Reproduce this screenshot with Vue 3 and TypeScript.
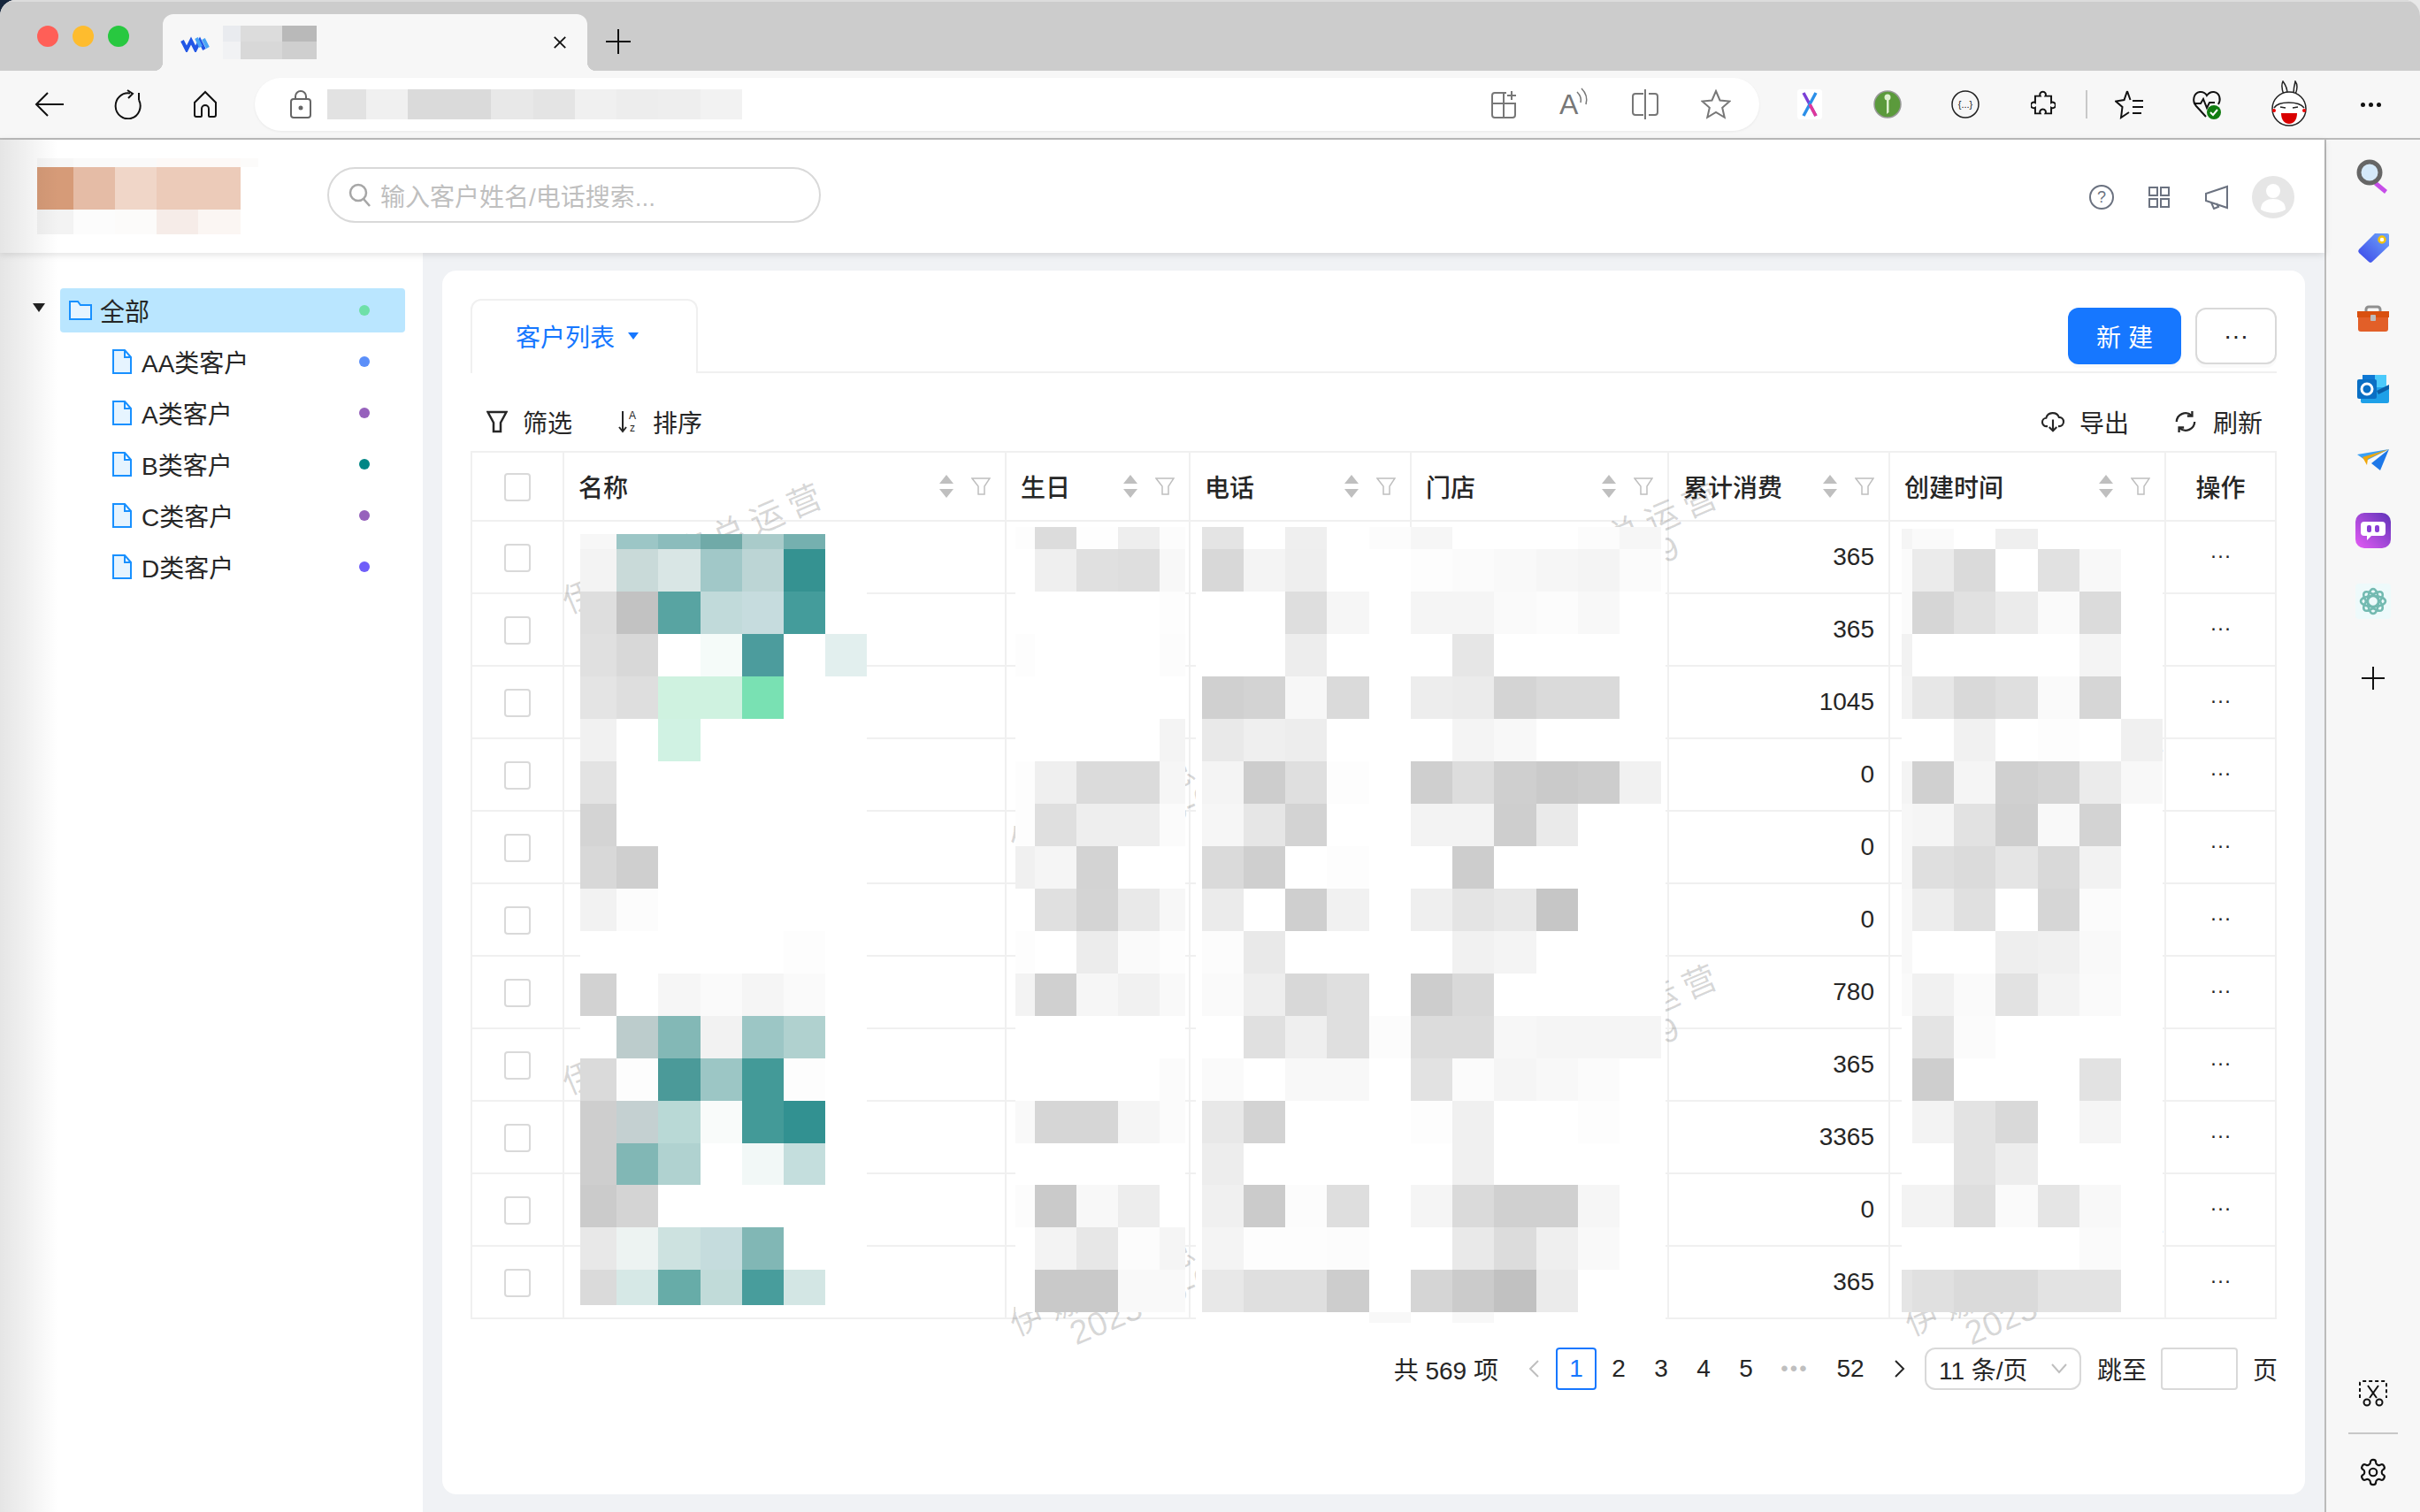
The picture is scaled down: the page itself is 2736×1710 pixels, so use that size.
<script setup lang="ts">
interface Mosaic {
  xs: number[]
  ys: number[]
  rows: string[]
}

const CARD_X = 500
const CARD_Y = 306

const treeChildren = [
  { label: 'AA类客户', dot: '#5b8ff9' },
  { label: 'A类客户', dot: '#9661bc' },
  { label: 'B类客户', dot: '#008685' },
  { label: 'C类客户', dot: '#9661bc' },
  { label: 'D类客户', dot: '#6f5ef9' }
]

const columns = ['名称', '生日', '电话', '门店', '累计消费', '创建时间']
const spend = ['365', '365', '1045', '0', '0', '0', '780', '365', '3365', '0', '365']
const pages = ['2', '3', '4', '5']

const rowEdges = [621, 669, 717, 765, 813, 861, 909, 957, 1005, 1053, 1101, 1149, 1197, 1245, 1293, 1340, 1388, 1436]

// pixelated cover blocks, colours per row (two digits = grey)
const mosaics: Mosaic[] = [
  {
    xs: [656, 697, 744, 792, 839, 886, 933, 980],
    ys: [604, ...rowEdges, 1476],
    rows: [
      'f7 9cc6c6 8bbcbc 70aaa8 a9cbca 75b0af',
      'f3 c9dad9 d9e6e5 a1c8c8 bcd5d5 359291',
      'de c2 58a4a2 c1dada c6dcde 449c9b',
      'e0 d8 ff f5fbf9 4c9c9d ff e2efee',
      'e4 de cff2e0 cff2e0 79e1b3',
      'f1 ff d0f2e3',
      'e3',
      'd4',
      'd8 cf',
      'f2 fc',
      'ff ff ff ff ff fd',
      'd2 ff f6 fa f5 fa',
      'ff bccccc 83b8b6 f2 9cc6c5 b0d1cf',
      'da fd 4b9a99 9cc6c5 439a98 fd',
      'ce c4d0d1 b9d9d6 f9fbfa 439a98 329191',
      'ce 81b7b5 b0d2d0 ff f2f8f7 c4dedd',
      'cb d4',
      'e8 edf3f2 cde2e0 c5dcdd 81b7b5',
      'da d6e8e6 67aca8 c1dbd9 489d9c d3e6e4'
    ]
  },
  {
    xs: [1148, 1170, 1217, 1264, 1311, 1340],
    ys: [596, ...rowEdges, 1484],
    rows: [
      'fd dc fe ee fc',
      'ff ef e0 de f8',
      'ff ff ff ff fd',
      'fd ff ff ff fc',
      'ff',
      'ff ff ff ff f4',
      'fd ef db db f6',
      'fd df ee ee fb',
      'f0 f5 d3 ff ff',
      'ff e0 d4 e9 f7',
      'fd ff ec fa fd',
      'f3 d0 f6 f1 f9',
      'ff',
      'ff ff ff ff fb',
      'f9 d6 d6 f5 fb',
      'ff',
      'fc ca f8 ed ff',
      'ff f3 e7 fc f5',
      'ff c9 c9 f9 f9'
    ]
  },
  { xs: [1352, 1359], ys: [596, 1496], rows: ['ff'] },
  {
    xs: [1359, 1406, 1453, 1500, 1548, 1595, 1642, 1689, 1737, 1784, 1831, 1878, 1883],
    ys: [596, ...rowEdges, 1484, 1496],
    rows: [
      'e4 ff ef ff fc f6 ff ff ff fc f6',
      'd8 f4 ee ff ff fd fb f9 f6 f4 fb',
      'ff ff de f6 ff f5 f5 fa fc f8',
      'ff ff ed ff ff ff e6',
      'd0 d3 f7 da ff ed eb d4 da da',
      'e9 ef ed ff ff ff f4 f8',
      'f4 cd df fd ff cf dd cf ca cd f1',
      'f6 e6 d3 ff ff f3 f3 ce ea',
      'da cf ff fd ff ff cd',
      'eb ff cf f1 ff ef e4 e8 c6',
      'fc e9 ff ff ff ff f1 f4',
      'fa ee d8 df ff cd d9',
      'ff e0 ef df fc dc dc f7 f5 f5 f5',
      'fa ff f8 f8 ff e2 fb f5 f8 fb',
      'e8 d3 ff ff ff fd f0 ff ff fd',
      'ed ff ff ff ff ff f0',
      'f0 cb fc de ff f5 da d0 d0 f6',
      'f4 fd fd fc ff ff e9 dc ef f9',
      'e8 df df cd ff d5 cb c1 eb',
      'ff ff ff ff f8 ff f8'
    ]
  },
  {
    xs: [2150, 2162, 2209, 2256, 2304, 2351, 2398, 2445],
    ys: [598, ...rowEdges, 1484],
    rows: [
      'f5 fa ff ef',
      'fb eb da ff e1 f8',
      'fb d6 e1 eb fa db',
      'f2 ff ff ff ff f4',
      'f3 e7 d9 df fa d6',
      'ff ff f1 ff fd ff f0',
      'f4 d0 f5 d0 d4 eb f8',
      'f7 f5 e2 ce f9 d3',
      'f7 df db e5 d9 f2',
      'f8 ed e0 ff d6 fb',
      'f8 ff ff ee f0 f9',
      'fa f1 fa e2 f3 fa',
      'ff e4 fb ff ff ff',
      'ff ce ff ff ff e2',
      'ff f3 e3 d9 ff f5',
      'ff ff e3 ed',
      'f3 f3 de fa e5 f8',
      'ff ff ff ff ff fa',
      'e5 e0 da da e3 e3'
    ]
  }
]

const watermarks = [
  [645, 699], [1151, 972], [1657, 699], [2163, 972],
  [645, 1243], [1151, 1516], [1657, 1243], [2163, 1516]
]

const colour = (c?: string) => {
  if (!c) return '#fff'
  return c.length === 2 ? `#${c}${c}${c}` : `#${c}`
}

const sizes = (edges: number[]) =>
  edges.slice(1).map((v, i) => `${v - edges[i]}px`).join(' ')

const mosaicStyle = (m: Mosaic) => ({
  left: `${m.xs[0] - CARD_X}px`,
  top: `${m.ys[0] - CARD_Y}px`,
  gridTemplateColumns: sizes(m.xs),
  gridTemplateRows: sizes(m.ys)
})

const mosaicCells = (m: Mosaic) =>
  m.rows.flatMap((row) => {
    const parts = row.split(' ')
    return m.xs.slice(1).map((_, i) => colour(parts[i]))
  })

const markStyle = (p: number[]) => ({
  left: `${p[0] - CARD_X}px`,
  top: `${p[1] - CARD_Y - 36}px`
})

const logoCells = [
  'f7', 'fa', 'fa', 'fdf9f7', 'fdf9f7', 'fcfbfa',
  'd69b78', 'e5bca6', 'f0d6c8', 'eccbb9', 'eccbb9', 'ff',
  'f3', 'fc', 'fcfbfa', 'f6ece8', 'fbf6f3', 'ff'
].map(colour)
const titleCells = ['e9ebef', 'dc', 'b9', 'f1f2f4', 'd8', 'cf'].map(colour)
const urlCells = ['e2', 'f0', 'da', 'da', 'e8', 'e4', 'f0', 'ed', 'ee', 'f2'].map(colour)
</script>

<template>
  <div class="browser">
    <div class="tab-strip">
      <div class="lights">
        <span class="light red"></span>
        <span class="light yellow"></span>
        <span class="light green"></span>
      </div>
      <div class="tab">
        <svg class="favicon" viewBox="0 0 34 18">
          <path d="M2 5l5 10L12 5l5 10L22 5l5 10" fill="none" stroke="#2257e6" stroke-width="4" />
          <path d="M18 2l5 10M26 3l5 10" fill="none" stroke="#4aa5f5" stroke-width="4" />
        </svg>
        <div class="title-mosaic">
          <i v-for="(c, i) in titleCells" :key="i" :style="{ background: c }"></i>
        </div>
        <svg class="tab-close" viewBox="0 0 18 18">
          <path d="M2 2l14 14M16 2L2 16" stroke="#111" stroke-width="2" />
        </svg>
      </div>
      <svg class="tab-plus" viewBox="0 0 28 28">
        <path d="M14 0v28M0 14h28" stroke="#111" stroke-width="2" />
      </svg>
    </div>

    <div class="toolbar">
      <div class="slot">
        <svg width="34" height="30" viewBox="0 0 34 30" fill="none" stroke="#111" stroke-width="2">
          <path d="M33 15H2M15 2L2 15l13 13" />
        </svg>
      </div>
      <div class="slot">
        <svg width="34" height="34" viewBox="0 0 34 34" fill="none" stroke="#111" stroke-width="2">
          <path d="M20 4.500A14 14.500 0 1 0 30 12" />
          <path d="M17 1l6 4-5 5M30 4v8" />
        </svg>
      </div>
      <div class="slot">
        <svg width="30" height="32" viewBox="0 0 30 32" fill="none" stroke="#111" stroke-width="2">
          <path d="M15 2L3 14v14a2 2 0 0 0 2 2h5a1 1 0 0 0 1-1v-8a4 4 0 0 1 8 0v8a1 1 0 0 0 1 1h5a2 2 0 0 0 2-2V14z" />
        </svg>
      </div>

      <div class="address">
        <svg class="lock" width="24" height="32" viewBox="0 0 24 32" fill="none" stroke="#666" stroke-width="2">
          <rect x="1" y="10" width="22" height="21" rx="3" />
          <path d="M6 10V7a6 6 0 0 1 12 0v3" />
          <circle cx="12" cy="20" r="1.500" fill="#666" />
        </svg>
        <div class="url-mosaic">
          <i v-for="(c, i) in urlCells" :key="i" :style="{ background: c }"></i>
        </div>
        <div class="address-icons">
          <div class="slot narrow">
            <svg width="30" height="32" viewBox="0 0 30 32" fill="none" stroke="#777" stroke-width="2">
              <path d="M18 3H5a3 3 0 0 0-3 3v22a3 3 0 0 0 3 3h20a3 3 0 0 0 3-3V15H2M15 3v28" />
              <path d="M24 1v10M19 6h10" />
            </svg>
          </div>
          <div class="slot narrow">
            <svg width="34" height="40" viewBox="0 0 34 40" fill="none" stroke="#777" stroke-width="1.500">
              <text x="0" y="31" font-size="32" font-family="Liberation Sans" fill="#777" stroke="none">A</text>
              <path d="M20 6c4 4 5 8 4 12M25 2c5 5 7 11 5 18" />
            </svg>
          </div>
          <div class="slot narrow">
            <svg width="32" height="34" viewBox="0 0 32 34" fill="none" stroke="#777" stroke-width="2">
              <path d="M14 5H5a3 3 0 0 0-3 3v18a3 3 0 0 0 3 3h9M20 5h7a3 3 0 0 1 3 3v18a3 3 0 0 1-3 3h-7M16 0v34" />
            </svg>
          </div>
          <div class="slot narrow">
            <svg width="34" height="34" viewBox="0 0 34 34" fill="none" stroke="#777" stroke-width="2">
              <path d="M17 2l4.500 10.500 11 1-8.300 7.300 2.500 11L17 26l-9.700 5.800 2.500-11L1.500 13.500l11-1z" />
            </svg>
          </div>
        </div>
      </div>

      <div class="extensions">
        <div class="slot">
          <svg width="28" height="34" viewBox="0 0 28 34" fill="none" stroke-width="3.500">
            <rect width="28" height="34" rx="3" fill="#fff" />
            <path d="M7 4l14 26" stroke="#7b3fd6" />
            <path d="M21 4L7 30" stroke="#2b8fe8" />
            <path d="M14 17l7 13" stroke="#e0389a" />
          </svg>
        </div>
        <div class="slot">
          <svg width="32" height="32" viewBox="0 0 32 32">
            <circle cx="16" cy="16" r="15" fill="#5b9a3c" stroke="#999" stroke-width="1.500" />
            <circle cx="16" cy="8" r="3.500" fill="#dff0d2" />
            <path d="M15 10h2.500v15L15 27z" fill="#dff0d2" />
          </svg>
        </div>
        <div class="slot">
          <svg width="32" height="32" viewBox="0 0 32 32" fill="none" stroke="#222" stroke-width="1.500">
            <circle cx="16" cy="16" r="15" />
            <text x="16" y="20" text-anchor="middle" font-size="11" font-family="Liberation Sans" fill="#222" stroke="none">{...}</text>
          </svg>
        </div>
        <div class="slot">
          <svg width="28" height="33" viewBox="4 2 17 20" fill="none" stroke="#111" stroke-width="1.200">
            <path d="M7 6h3.500a2 2 0 1 1 3.500 0H18v4.500a2 2 0 1 1 0 3.500V18h-4a2 2 0 1 0-3.500 0H7v-4a2 2 0 1 1 0-3.500z" />
          </svg>
        </div>
        <span class="ext-sep"></span>
        <div class="slot">
          <svg width="34" height="34" viewBox="0 0 34 34" fill="none" stroke="#111" stroke-width="2">
            <path d="M14 2l-3.500 10L1 13.500l7.500 6.500L7 32l9-6" />
            <path d="M14 2l3.500 10M20 13h12M20 20h12M20 27h10" />
          </svg>
        </div>
        <div class="slot">
          <svg width="36" height="36" viewBox="0 0 36 36" fill="none" stroke="#111" stroke-width="2">
            <path d="M16 32L5 20C0 14 2 5 9 4c4-.500 7 2 8 4 1.500-2 4-4.500 8-4 7 1 8 9 5 14" />
            <path d="M2 17h8l3-5 4 10 3-6h6" />
            <circle cx="25" cy="27" r="8" fill="#107c10" stroke="none" />
            <path d="M21 27l3 3 5-6" stroke="#fff" />
          </svg>
        </div>
        <div class="slot avatar-slot">
          <svg width="44" height="54" viewBox="0 0 44 54" fill="#fff" stroke="#222" stroke-width="1.500">
            <path d="M16 16C13 8 14 3 15 1c3 4 5 9 5 14M27 15c0-6 1-10 2-14 3 4 2 10 0 15" />
            <circle cx="22" cy="32" r="19" />
            <path d="M5 31c5-8 28-8 34 0" fill="none" />
            <path d="M12 30l6 1M26 31l6-1" />
            <path d="M13 37h18c0 8-4 12-9 12s-9-4-9-12z" fill="#d90000" stroke="none" />
            <circle cx="5" cy="34" r="2" fill="#e00" stroke="none" />
            <circle cx="39" cy="34" r="2" fill="#e00" stroke="none" />
          </svg>
        </div>
        <div class="more-dots"><i></i><i></i><i></i></div>
      </div>
    </div>

    <div class="workspace">
      <div class="page">
        <header class="app-header">
          <div class="logo-mosaic">
            <i v-for="(c, i) in logoCells" :key="i" :style="{ background: c }"></i>
          </div>
          <div class="search">
            <svg width="26" height="28" viewBox="0 0 26 28" fill="none" stroke="#a6a6a6" stroke-width="2.500">
              <circle cx="11" cy="11" r="9" />
              <path d="M17 18l7 8" />
            </svg>
            <span>输入客户姓名/电话搜索...</span>
          </div>
          <div class="header-actions">
            <svg width="28" height="28" viewBox="0 0 28 28" fill="none" stroke="#6b7280" stroke-width="2">
              <circle cx="14" cy="14" r="13" />
              <text x="14" y="20" text-anchor="middle" font-size="18" font-family="Liberation Sans" fill="#6b7280" stroke="none">?</text>
            </svg>
            <svg width="24" height="24" viewBox="0 0 24 24" fill="none" stroke="#6b7280" stroke-width="2">
              <rect x="1" y="1" width="9" height="9" />
              <rect x="14" y="1" width="9" height="9" />
              <rect x="1" y="14" width="9" height="9" />
              <rect x="14" y="14" width="9" height="9" />
            </svg>
            <svg width="28" height="28" viewBox="0 0 28 28" fill="none" stroke="#6b7280" stroke-width="2">
              <path d="M26 2v24L2 18V10zM8 20l3 7 5-2-2-4" />
            </svg>
            <svg class="user" width="48" height="48" viewBox="0 0 48 48">
              <circle cx="24" cy="24" r="24" fill="#e6e6e6" />
              <circle cx="24" cy="17" r="8" fill="#fff" />
              <path d="M10 38c0-9 7-12 14-12s14 3 14 12c-8 5-20 5-28 0z" fill="#fff" />
            </svg>
          </div>
        </header>

        <div class="main">
          <aside class="sidebar">
            <div class="tree-row root">
              <svg class="caret" width="14" height="10" viewBox="0 0 14 10">
                <path d="M0 0h14L7 10z" fill="#222" />
              </svg>
              <div class="tree-node selected">
                <svg width="26" height="22" viewBox="0 0 26 22" fill="#e6f4ff" stroke="#1890ff" stroke-width="2">
                  <path d="M1 1h9l3 4h12v16H1z" />
                </svg>
                <span class="tree-label">全部</span>
                <i class="dot" style="background: #6ee0a8"></i>
              </div>
            </div>
            <div v-for="item in treeChildren" :key="item.label" class="tree-row child">
              <svg width="22" height="28" viewBox="0 0 22 28" fill="#e6f4ff" stroke="#1890ff" stroke-width="2">
                <path d="M1 1h13l7 8v18H1zM14 1v8h7" />
              </svg>
              <span class="tree-label">{{ item.label }}</span>
              <i class="dot" :style="{ background: item.dot }"></i>
            </div>
          </aside>

          <section class="card">
            <div class="tabs">
              <div class="tab-active">
                客户列表
                <svg width="12" height="10" viewBox="0 0 12 10"><path d="M0 1h12L6 9z" fill="#1677ff" /></svg>
              </div>
              <div class="tab-rest">
                <button class="btn primary">新 建</button>
                <button class="btn ghost">···</button>
              </div>
            </div>

            <div class="filters">
              <div class="filter-group">
                <span class="tool">
                  <svg width="24" height="26" viewBox="0 0 24 26" fill="none" stroke="#262626" stroke-width="2.500">
                    <path d="M1.500 2h21L16 14v10H8V14z" />
                  </svg>
                  筛选
                </span>
                <span class="tool">
                  <svg width="22" height="28" viewBox="0 0 22 28" fill="none" stroke="#262626" stroke-width="2">
                    <path d="M5 2v23M1 20l4 5 4-5" />
                    <text x="12" y="11" font-size="12" font-family="Liberation Sans" fill="#262626" stroke="none">A</text>
                    <text x="13" y="25" font-size="12" font-family="Liberation Sans" fill="#262626" stroke="none">z</text>
                  </svg>
                  排序
                </span>
              </div>
              <div class="filter-group right">
                <span class="tool">
                  <svg class="cloud" width="28" height="24" viewBox="0 0 30 28" fill="none" stroke="#262626" stroke-width="2.500">
                    <path d="M8 20H7a5.500 5.500 0 0 1-1-11A9 9 0 0 1 23 8a6 6 0 0 1 0 12h-1" />
                    <path d="M15 11v15M10 21l5 5 5-5" />
                  </svg>
                  导出
                </span>
                <span class="tool">
                  <svg width="26" height="28" viewBox="0 0 28 28" fill="none" stroke="#262626" stroke-width="2.500">
                    <path d="M3 14A11 11 0 0 1 21 6M25 14A11 11 0 0 1 7 22" />
                    <path d="M22 1v6h-6M6 27v-6h6" />
                  </svg>
                  刷新
                </span>
              </div>
            </div>

            <div class="table-wrap">
              <table>
                <colgroup>
                  <col style="width: 104px" />
                  <col style="width: 500px" />
                  <col style="width: 208px" />
                  <col style="width: 250px" />
                  <col style="width: 291px" />
                  <col style="width: 250px" />
                  <col style="width: 312px" />
                  <col style="width: 125px" />
                </colgroup>
                <thead>
                  <tr>
                    <th class="check-cell"><span class="checkbox"></span></th>
                    <th v-for="col in columns" :key="col">
                      <div class="th-inner">
                        <span class="th-label">{{ col }}</span>
                        <svg class="sort" width="16" height="26" viewBox="0 0 16 26" fill="#bfbfbf">
                          <path d="M8 0l8 10H0zM8 26l8-10H0z" />
                        </svg>
                        <svg class="funnel" width="22" height="20" viewBox="0 0 22 20" fill="none" stroke="#bfbfbf" stroke-width="1.500">
                          <path d="M1 1h20l-6 9v9H8v-9z" />
                        </svg>
                      </div>
                    </th>
                    <th class="op-head">操作</th>
                  </tr>
                </thead>
                <tbody>
                  <tr v-for="(value, i) in spend" :key="i">
                    <td class="check-cell"><span class="checkbox"></span></td>
                    <td></td>
                    <td></td>
                    <td></td>
                    <td></td>
                    <td class="num">{{ value }}</td>
                    <td></td>
                    <td class="op">···</td>
                  </tr>
                </tbody>
              </table>
            </div>

            <div class="pagination">
              <span class="total">共 569 项</span>
              <span class="pg prev">
                <svg width="12" height="20" viewBox="0 0 12 20" fill="none" stroke="#bfbfbf" stroke-width="2"><path d="M11 1L2 10l9 9" /></svg>
              </span>
              <span class="pg current"><b>1</b></span>
              <span v-for="p in pages" :key="p" class="pg">{{ p }}</span>
              <span class="pg jump">•••</span>
              <span class="pg last">52</span>
              <span class="pg">
                <svg width="12" height="20" viewBox="0 0 12 20" fill="none" stroke="#262626" stroke-width="2"><path d="M1 1l9 9-9 9" /></svg>
              </span>
              <span class="size-select">
                11 条/页
                <svg width="18" height="12" viewBox="0 0 18 12" fill="none" stroke="#bfbfbf" stroke-width="2"><path d="M1 1l8 9 8-9" /></svg>
              </span>
              <span class="jump-label">跳至</span>
              <span class="jump-input"></span>
              <span class="page-word">页</span>
            </div>

            <div v-for="(p, i) in watermarks" :key="`w${i}`" class="watermark" :style="markStyle(p)">
              <div>伊娜门店总运营</div>
              <div class="wm-date">2023-06-09</div>
            </div>
            <div v-for="(m, i) in mosaics" :key="`m${i}`" class="mosaic" :style="mosaicStyle(m)">
              <i v-for="(c, j) in mosaicCells(m)" :key="j" :style="{ background: c }"></i>
            </div>
          </section>
        </div>
      </div>

      <aside class="edge-bar">
        <div class="edge-top">
          <svg width="38" height="40" viewBox="0 0 38 40">
            <path d="M23 25l12 10-3 4-12-10z" fill="#c64ee8" />
            <circle cx="15" cy="15" r="12" fill="#d5e9fa" stroke="#666" stroke-width="5" />
          </svg>
          <svg width="36" height="36" viewBox="0 0 36 36">
            <defs>
              <linearGradient id="tag" x1="0" y1="1" x2="1" y2="0">
                <stop offset="0" stop-color="#3a45e8" />
                <stop offset="1" stop-color="#6fa6fb" />
              </linearGradient>
            </defs>
            <path d="M20 2h14a2 2 0 0 1 2 2v12L17 34a3 3 0 0 1-4 0L2 24a3 3 0 0 1 0-4z" fill="url(#tag)" />
            <circle cx="28" cy="9" r="3.500" fill="#fff" stroke="#f2c40f" stroke-width="2.500" />
          </svg>
          <svg width="36" height="30" viewBox="0 0 36 30">
            <path d="M10 10V5a3 3 0 0 1 3-3h10a3 3 0 0 1 3 3v5" fill="none" stroke="#8f8f8f" stroke-width="3" />
            <path d="M0 7h36v7H0z" fill="#d9500f" />
            <path d="M1 14h34v13a3 3 0 0 1-3 3H4a3 3 0 0 1-3-3z" fill="#e25f28" />
            <rect x="15" y="11" width="6" height="7" rx="1" fill="#bdbdbd" />
          </svg>
          <svg width="36" height="32" viewBox="0 0 36 32">
            <path d="M6 0h27v14H6z" fill="#0f78d4" />
            <path d="M20 0h13v14H20z" fill="#4bcafb" />
            <path d="M4 14h32v16a2 2 0 0 1-2 2H6a2 2 0 0 1-2-2z" fill="#1ea0e8" />
            <path d="M22 18l14-7v5l-12 6z" fill="#0a5fa8" />
            <rect y="5" width="22" height="22" rx="2" fill="#0a6fc4" />
            <ellipse cx="11" cy="16" rx="6" ry="6" fill="none" stroke="#fff" stroke-width="3" />
          </svg>
          <svg width="36" height="24" viewBox="0 0 36 24">
            <path d="M0 6L36 0 10 13z" fill="#3aa0f5" />
            <path d="M6 9L36 0 12 11l-1 7z" fill="#f0a70a" />
            <path d="M36 0L26 24l-10-8z" fill="#1e78e8" />
          </svg>
          <svg width="40" height="40" viewBox="0 0 40 40">
            <defs>
              <linearGradient id="bot" x1="0" y1="1" x2="1" y2="0">
                <stop offset="0" stop-color="#e55cf5" />
                <stop offset="1" stop-color="#5e33b8" />
              </linearGradient>
            </defs>
            <rect width="40" height="40" rx="10" fill="url(#bot)" />
            <path d="M10 10h20a4 4 0 0 1 4 4v8a4 4 0 0 1-4 4H18l-5 5v-5h-3a4 4 0 0 1-4-4v-8a4 4 0 0 1 4-4z" fill="#fff" />
            <rect x="13" y="14" width="5" height="8" rx="2" fill="#8a3ed6" />
            <rect x="22" y="14" width="5" height="8" rx="2" fill="#8a3ed6" />
          </svg>
          <svg width="40" height="40" viewBox="0 0 40 40" fill="none">
            <rect width="40" height="40" rx="4" fill="#eefafb" />
            <g stroke="#55ab9f" stroke-width="2.500" opacity="0.8">
              <ellipse cx="20" cy="20" rx="14" ry="6" />
              <ellipse cx="20" cy="20" rx="14" ry="6" transform="rotate(45 20 20)" />
              <ellipse cx="20" cy="20" rx="14" ry="6" transform="rotate(90 20 20)" />
              <ellipse cx="20" cy="20" rx="14" ry="6" transform="rotate(135 20 20)" />
            </g>
          </svg>
          <svg class="edge-plus" width="26" height="26" viewBox="0 0 26 26">
            <path d="M13 0v26M0 13h26" stroke="#111" stroke-width="2" />
          </svg>
        </div>
        <div class="edge-bottom">
          <svg width="32" height="30" viewBox="0 0 32 30" fill="none" stroke="#111" stroke-width="2">
            <path d="M1 20V3a2 2 0 0 1 2-2h26a2 2 0 0 1 2 2v17" stroke-dasharray="4 3" />
            <path d="M10 6l10 14M22 6L12 20" />
            <circle cx="9" cy="25" r="3.500" />
            <circle cx="23" cy="25" r="3.500" />
          </svg>
          <span class="edge-sep"></span>
          <svg width="34" height="34" viewBox="0 0 24 24" fill="none" stroke="#111" stroke-width="1.500">
            <path d="M12.220 2h-.44a2 2 0 0 0-2 2v.18a2 2 0 0 1-1 1.730l-.43.25a2 2 0 0 1-2 0l-.15-.08a2 2 0 0 0-2.730.73l-.22.38a2 2 0 0 0 .73 2.730l.15.1a2 2 0 0 1 1 1.720v.51a2 2 0 0 1-1 1.740l-.15.09a2 2 0 0 0-.73 2.730l.22.38a2 2 0 0 0 2.730.73l.15-.08a2 2 0 0 1 2 0l.43.25a2 2 0 0 1 1 1.730V20a2 2 0 0 0 2 2h.44a2 2 0 0 0 2-2v-.18a2 2 0 0 1 1-1.730l.43-.25a2 2 0 0 1 2 0l.15.08a2 2 0 0 0 2.730-.73l.22-.39a2 2 0 0 0-.73-2.730l-.15-.08a2 2 0 0 1-1-1.740v-.5a2 2 0 0 1 1-1.740l.15-.09a2 2 0 0 0 .73-2.730l-.22-.38a2 2 0 0 0-2.730-.73l-.15.08a2 2 0 0 1-2 0l-.43-.25a2 2 0 0 1-1-1.730V4a2 2 0 0 0-2-2z" />
            <circle cx="12" cy="12" r="3" />
          </svg>
        </div>
      </aside>
    </div>
  </div>
</template>

<style>
html,
body {
  margin: 0;
  background: linear-gradient(90deg, #16263c 50%, #e8e8e8 50%);
}
</style>

<style scoped>
.browser {
  width: 2736px;
  height: 1710px;
  display: flex;
  flex-direction: column;
  overflow: hidden;
  border-radius: 18px 18px 0 0;
  background: #f7f7f7;
  font-family: "Liberation Sans", "Noto Sans CJK SC", sans-serif;
  font-size: 28px;
  color: #262626;
}

.tab-strip {
  height: 80px;
  flex: none;
  box-sizing: border-box;
  display: flex;
  align-items: flex-end;
  background: #cccccc;
  border-top: 2px solid #dcdcdc;
}

.lights {
  width: 184px;
  height: 78px;
  box-sizing: border-box;
  padding: 27px 0 0 42px;
  display: flex;
  gap: 16px;
}

.light {
  width: 24px;
  height: 24px;
  border-radius: 50%;
}
.red { background: #ff5f57; }
.yellow { background: #febc2e; }
.green { background: #28c840; }

.tab {
  width: 480px;
  height: 64px;
  position: relative;
  display: flex;
  align-items: center;
  background: #f7f7f7;
  border-radius: 12px 12px 0 0;
}

.tab::before,
.tab::after {
  content: "";
  position: absolute;
  bottom: 0;
  width: 10px;
  height: 10px;
}
.tab::before {
  left: -10px;
  background: radial-gradient(circle at 0 0, transparent 10px, #f7f7f7 10.5px);
}
.tab::after {
  right: -10px;
  background: radial-gradient(circle at 100% 0, transparent 10px, #f7f7f7 10.5px);
}

.favicon {
  width: 34px;
  height: 18px;
  margin: 4px 0 0 20px;
}

.title-mosaic {
  width: 106px;
  height: 38px;
  margin-left: 14px;
  display: grid;
  grid-template-columns: 20px 47px 39px;
  grid-template-rows: 18px 20px;
}

.tab-close {
  width: 16px;
  height: 16px;
  margin-left: auto;
  margin-right: 23px;
}

.tab-plus {
  width: 28px;
  height: 28px;
  margin: 0 0 19px 21px;
}

.toolbar {
  height: 78px;
  flex: none;
  box-sizing: border-box;
  display: flex;
  align-items: center;
  padding-left: 12px;
  border-bottom: 2px solid #bbbbbb;
  background: #f7f7f7;
}

.slot {
  width: 88px;
  display: flex;
  justify-content: center;
  align-items: center;
}
.slot.narrow { width: 80px; }

.address {
  width: 1701px;
  height: 60px;
  margin-left: 12px;
  flex: none;
  display: flex;
  align-items: center;
  background: #fff;
  border-radius: 30px;
  box-shadow: 0 1px 3px rgba(0, 0, 0, 0.06);
}

.lock {
  margin-left: 40px;
}

.url-mosaic {
  display: grid;
  grid-template-columns: 44px 47px 47px 47px 48px 47px 47px 47px 48px 47px;
  grid-template-rows: 34px;
  margin-left: 18px;
}

.address-icons {
  display: flex;
  margin-left: auto;
  margin-right: 9px;
}

.extensions {
  display: flex;
  align-items: center;
  margin-left: 13px;
}

.ext-sep {
  width: 2px;
  height: 32px;
  margin: 0 4px;
  background: #c8c8c8;
}

.avatar-slot {
  margin-left: 4px;
}

.more-dots {
  display: flex;
  gap: 4px;
  margin-left: 37px;
}
.more-dots i {
  width: 5px;
  height: 5px;
  border-radius: 50%;
  background: #111;
}

.workspace {
  flex: 1;
  display: flex;
  min-height: 0;
}

.page {
  flex: 1;
  position: relative;
  display: flex;
  flex-direction: column;
  min-width: 0;
  background: #f0f2f5;
}

/* soft grey fade on the left edge */
.page::before {
  content: "";
  position: absolute;
  z-index: 3;
  left: 0;
  top: 0;
  bottom: 0;
  width: 66px;
  background: linear-gradient(90deg, rgba(0, 0, 0, 0.1), rgba(0, 0, 0, 0));
  pointer-events: none;
}

.app-header {
  height: 128px;
  flex: none;
  position: relative;
  z-index: 2;
  display: flex;
  align-items: center;
  background: #fff;
  box-shadow: 0 2px 8px rgba(0, 0, 0, 0.12);
}

.logo-mosaic {
  display: grid;
  grid-template-columns: 41px 47px 47px 47px 48px 20px;
  grid-template-rows: 10px 48px 28px;
  margin-left: 42px;
}

.search {
  width: 558px;
  height: 63px;
  box-sizing: border-box;
  margin: -3px 0 0 78px;
  padding-left: 22px;
  display: flex;
  align-items: center;
  gap: 10px;
  border: 2px solid #d9d9d9;
  border-radius: 32px;
  color: #bfbfbf;
}

.header-actions {
  display: flex;
  align-items: center;
  margin: 2px 34px 0 auto;
}
.header-actions svg + svg { margin-left: 39px; }
.header-actions .user { margin-left: 26px; }

.main {
  flex: 1;
  display: flex;
  min-height: 0;
}

.sidebar {
  width: 478px;
  flex: none;
  box-sizing: border-box;
  padding-top: 36px;
  background: #fff;
}

.tree-row {
  height: 58px;
  display: flex;
  align-items: center;
}

.caret {
  margin: -6px 17px 0 37px;
}

.tree-node {
  width: 390px;
  height: 50px;
  position: relative;
  display: flex;
  align-items: center;
  box-sizing: border-box;
  padding-left: 10px;
  border-radius: 4px;
}
.selected { background: #bae6ff; }
.selected .tree-label { margin-left: 9px; }

.child {
  position: relative;
  padding-left: 127px;
}
.child .tree-label { margin-left: 11px; }

.dot {
  position: absolute;
  width: 12px;
  height: 12px;
  border-radius: 50%;
}
.selected .dot { left: 338px; top: 19px; }
.child .dot { left: 406px; top: 23px; }

.card {
  flex: 1;
  position: relative;
  margin: 20px 22px 20px;
  box-sizing: border-box;
  padding: 32px;
  background: #fff;
  border-radius: 16px;
}

.tabs {
  display: flex;
  height: 84px;
}

.tab-active {
  width: 257px;
  box-sizing: border-box;
  display: flex;
  align-items: center;
  gap: 15px;
  padding: 0 0 2px 49px;
  border: 2px solid #f0f0f0;
  border-bottom: none;
  border-radius: 12px 12px 0 0;
  color: #1677ff;
}

.tab-rest {
  flex: 1;
  display: flex;
  justify-content: flex-end;
  gap: 16px;
  padding-top: 10px;
  height: 72px;
  border-bottom: 2px solid #f0f0f0;
}

.btn {
  height: 64px;
  border-radius: 12px;
  font-family: inherit;
  font-size: 28px;
  padding: 0;
  box-shadow: 0 4px 0 rgba(0, 0, 0, 0.02);
}
.primary {
  width: 128px;
  border: none;
  background: #1677ff;
  color: #fff;
}
.ghost {
  width: 92px;
  border: 2px solid #d9d9d9;
  background: #fff;
  color: #262626;
}

.filters {
  height: 88px;
  display: flex;
  justify-content: space-between;
  align-items: center;
  padding-top: 22px;
  box-sizing: border-box;
}

.filter-group {
  display: flex;
  gap: 52px;
  padding-left: 18px;
}
.filter-group.right {
  gap: 51px;
  padding-left: 0;
  padding-right: 16px;
}

.tool {
  display: flex;
  align-items: center;
  gap: 17px;
}
.right .tool { gap: 18px; }
.cloud { margin-right: -2px; }

.table-wrap {
  border-top: 2px solid #f0f0f0;
  border-left: 2px solid #f0f0f0;
}

table {
  width: 2040px;
  table-layout: fixed;
  border-collapse: separate;
  border-spacing: 0;
}

th,
td {
  box-sizing: border-box;
  padding: 0;
  border-right: 2px solid #f0f0f0;
  border-bottom: 2px solid #f0f0f0;
  font-size: 28px;
}

th {
  height: 78px;
  font-weight: 500;
  text-align: left;
}

td {
  height: 82px;
}

.check-cell {
  text-align: center;
}

.checkbox {
  display: inline-block;
  width: 30px;
  height: 32px;
  box-sizing: border-box;
  vertical-align: middle;
  border: 2px solid #d9d9d9;
  border-radius: 4px;
}

.th-inner {
  display: flex;
  align-items: center;
  padding: 0 16px;
}

.th-label {
  flex: 1;
}

.funnel {
  margin-left: 20px;
}

.op-head {
  text-align: center;
}

.num {
  text-align: right;
  padding-right: 16px;
}

.op {
  text-align: center;
  font-size: 24px;
  line-height: 1;
  padding-bottom: 4px;
}

.pagination {
  display: flex;
  align-items: center;
  justify-content: flex-end;
  height: 48px;
  margin-top: 32px;
}

.total {
  margin-right: 16px;
}

.pg {
  width: 48px;
  height: 48px;
  display: flex;
  align-items: center;
  justify-content: center;
  box-sizing: border-box;
}

.current {
  width: 46px;
  margin: 0 1px;
  border: 2px solid #1677ff;
  border-radius: 4px;
  color: #1677ff;
}
.current b { font-weight: 400; }

.jump {
  width: 62px;
  color: #bfbfbf;
  letter-spacing: 2px;
  font-size: 24px;
}

.last {
  width: 64px;
}

.size-select {
  width: 177px;
  height: 48px;
  box-sizing: border-box;
  margin-left: 4px;
  padding: 0 14px;
  display: flex;
  align-items: center;
  justify-content: space-between;
  border: 2px solid #d9d9d9;
  border-radius: 12px;
}

.jump-label {
  margin-left: 18px;
}

.jump-input {
  width: 87px;
  height: 48px;
  box-sizing: border-box;
  margin-left: 16px;
  border: 2px solid #d9d9d9;
  border-radius: 4px;
}

.page-word {
  margin-left: 17px;
  margin-right: -1px;
}

.watermark {
  position: absolute;
  width: 330px;
  line-height: 36px;
  transform: rotate(-23deg);
  transform-origin: 0 36px;
  font-size: 38px;
  letter-spacing: 8px;
  white-space: nowrap;
  color: rgba(0, 0, 0, 0.16);
  pointer-events: none;
}

.wm-date {
  letter-spacing: 0;
  padding-left: 58px;
}

.mosaic {
  position: absolute;
  display: grid;
  background: #fff;
}

.edge-bar {
  width: 108px;
  flex: none;
  box-sizing: border-box;
  display: flex;
  flex-direction: column;
  justify-content: space-between;
  align-items: center;
  padding: 2px 0 28px;
  border-left: 2px solid #bbbbbb;
  background: #f7f7f7;
}

.edge-top {
  display: grid;
  grid-auto-rows: 80px;
  justify-items: center;
  align-items: center;
}

.edge-plus {
  margin-top: 14px;
}

.edge-bottom {
  display: flex;
  flex-direction: column;
  align-items: center;
  gap: 26px;
}

.edge-sep {
  width: 56px;
  height: 2px;
  margin-top: 3px;
  background: #c8c8c8;
}
</style>
